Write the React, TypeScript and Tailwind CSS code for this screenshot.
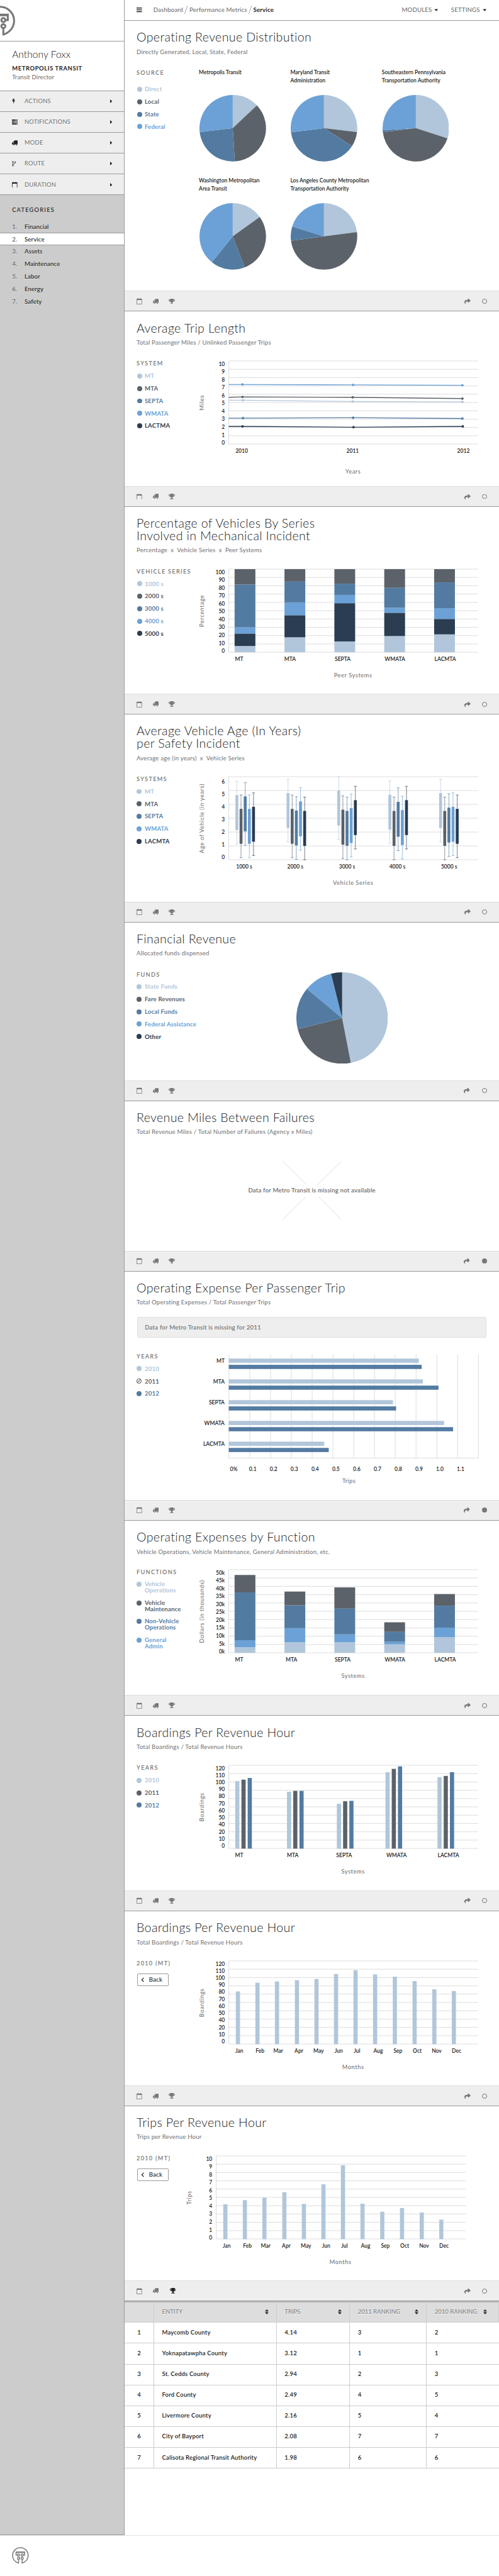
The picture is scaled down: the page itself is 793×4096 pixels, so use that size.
import type { ReactNode } from "react";
import { FaCaretDown, FaChevronLeft, FaShare, FaTrophy } from "react-icons/fa";

// The root sets --spacing so that one spacing step equals one unit of the 1200-unit wide layout.

const LIGHT = "#b1c6da";
const SLATE = "#5b6269";
const STEEL = "#537ba2";
const SKY = "#6ba1d6";
const NAVY = "#2a3d51";
const SYSTEMS = ["MT", "MTA", "SEPTA", "WMATA", "LACMTA"];
const MONTHS = ["Jan", "Feb", "Mar", "Apr", "May", "Jun", "Jul", "Aug", "Sep", "Oct", "Nov", "Dec"];

/* ---------- icons ---------- */

function CalendarIcon({ className }: { className: string }) {
  return (
    <svg viewBox="0 0 13 15" className={className} fill="none" stroke="currentColor">
      <rect x="0.6" y="2.4" width="11.8" height="12" strokeWidth="1.2" />
      <path d="M0.6 3.3h11.8" strokeWidth="2.6" />
      <path d="M3.7 0.2v3.6M9.3 0.2v3.6" strokeWidth="2.2" />
    </svg>
  );
}

function TruckIcon({ className }: { className: string }) {
  return (
    <svg viewBox="0 0 14 13" className={className} fill="currentColor">
      <path
        fillRule="evenodd"
        d="M5.3 0.5H14V10.2H12.7A2 2 0 0 0 8.9 10.2H6.1A2 2 0 0 0 2.3 10.2H0V6.4L3 2.9H5.3ZM1.5 6.4H4.3V4.1H3.5Z"
      />
      <circle cx="4.2" cy="10.8" r="1.5" />
      <circle cx="10.8" cy="10.8" r="1.5" />
    </svg>
  );
}

function BoltIcon({ className }: { className: string }) {
  return (
    <svg viewBox="0 0 8 13" className={className} fill="currentColor">
      <path d="M2.4 0H6L4.6 4L7.6 3.4L2.8 13L3.8 6.2L0.8 6.9Z" />
    </svg>
  );
}

function TasksIcon({ className }: { className: string }) {
  return (
    <svg viewBox="0 0 14 12" className={className}>
      <path d="M0 0h14v3H0zM0 4.5h14v3H0zM0 9h14v3H0z" fill="currentColor" />
      <path d="M8 1.5h5M5 6h8M10 10.5h3" stroke="#eee" strokeWidth="1" />
    </svg>
  );
}

function ForkIcon({ className }: { className: string }) {
  return (
    <svg viewBox="0 0 10 13" className={className} fill="none" stroke="currentColor" strokeWidth="1.2">
      <circle cx="2.2" cy="2" r="1.3" />
      <circle cx="7.8" cy="2.8" r="1.3" />
      <circle cx="2.2" cy="11" r="1.3" />
      <path d="M2.2 3.3v6.4M7.8 4.1c0 3-5.6 2.4-5.6 4.8" />
    </svg>
  );
}

function Logo({ className, stroke }: { className: string; stroke: number }) {
  return (
    <svg viewBox="0 0 40 40" className={className} fill="none" stroke="#777" strokeWidth={stroke}>
      <path
        d="M15.7 29.6V38.2C6.8 35 1.5 28.2 1.5 20A18.5 18.5 0 0 1 38.5 20C38.5 28.2 33.2 35 24.3 38.2V29.6"
        strokeLinejoin="round"
      />
      <path d="M13 19H9.8V11.8H30.2V19H27" />
      <path d="M9.8 12.4H30.2" strokeWidth={stroke + 0.6} />
      <circle cx="15.7" cy="19" r="2.6" />
      <circle cx="24.3" cy="19" r="2.6" />
      <circle cx="15.7" cy="27" r="2.6" />
      <circle cx="24.3" cy="27" r="2.6" />
    </svg>
  );
}

/* ---------- sidebar and header ---------- */

const ACTIONS: [string, ReactNode][] = [
  ["ACTIONS", <BoltIcon className="h-13 w-8" />],
  ["NOTIFICATIONS", <TasksIcon className="h-12 w-14" />],
  ["MODE", <TruckIcon className="h-13 w-14" />],
  ["ROUTE", <ForkIcon className="h-13 w-10" />],
  ["DURATION", <CalendarIcon className="h-15 w-13" />],
];

const CATEGORIES = ["Financial", "Service", "Assets", "Maintenance", "Labor", "Energy", "Safety"];

function Sidebar() {
  return (
    <aside className="w-300 shrink-0 border-r border-b border-[#999] bg-[#ccc]">
      <div className="h-100 overflow-hidden border-b border-[#999] bg-white pt-13">
        <Logo className="-ml-36.5 size-73" stroke={2.5} />
      </div>
      <div className="h-120 border-b border-[#999] bg-white pt-16.5 pl-29">
        <div className="text-[15.5px] leading-30 font-light tracking-[0.005em] text-[#111]">Anthony Foxx</div>
        <div className="mt-8.5 text-[9.4px] leading-20 font-bold tracking-[0.066em] text-[#222]">METROPOLIS TRANSIT</div>
        <div className="text-[9.5px] leading-20 tracking-[0.015em] text-[#6b6b6b]">Transit Director</div>
      </div>
      {ACTIONS.map(([label, icon]) => (
        <div key={label} className="flex h-50 items-center border-b border-[#999] bg-[#eee] pr-29 pl-29 text-[#222]">
          <span className="w-30">{icon}</span>
          <span className="text-[9.3px] tracking-[0.028em] text-[#6b6b6b] [text-shadow:0_1px_0_#fff]">{label}</span>
          <svg viewBox="0 0 5 9" className="ml-auto h-9 w-5">
            <path d="M0 0L5 4.5L0 9Z" fill="#222" />
          </svg>
        </div>
      ))}
      <div className="pt-24.5 pl-29 text-[9.3px] leading-20 font-medium tracking-[0.13em] text-[#222]">CATEGORIES</div>
      <ol className="mt-15.5 text-[9.7px] font-medium tracking-[0.01em] text-[#222]">
        {CATEGORIES.map((c, i) => (
          <li
            key={c}
            className={
              c === "Service"
                ? "flex h-30 items-center border-y border-[#999] bg-white pl-29"
                : "flex h-30 items-center pl-29 [text-shadow:0_1px_0_rgba(255,255,255,0.5)]"
            }
          >
            <span className="w-30 font-semibold text-[#6b6b6b]">{i + 1}.</span>
            {c}
          </li>
        ))}
      </ol>
    </aside>
  );
}

function Slash() {
  return (
    <svg viewBox="0 0 8 20" className="mx-3.5 h-20 w-8">
      <path d="M7.5 0L0.5 20" stroke="#777" strokeWidth="1" />
    </svg>
  );
}

function Header() {
  return (
    <header className="flex h-50 items-center border-b border-[#999] pr-30 pl-28.5 text-[9.6px] tracking-[0.02em] text-[#666]">
      <svg viewBox="0 0 13 11" className="mr-27.5 h-11 w-13">
        <path d="M0 1.2h13M0 5.5h13M0 9.8h13" stroke="#222" strokeWidth="2.2" />
      </svg>
      <span>Dashboard</span>
      <Slash />
      <span>Performance Metrics</span>
      <Slash />
      <span className="font-bold text-[#222]">Service</span>
      <span className="ml-auto">MODULES</span>
      <FaCaretDown className="ml-6 h-14 w-10 text-[#222]" />
      <span className="ml-30">SETTINGS</span>
      <FaCaretDown className="ml-6 h-14 w-10 text-[#222]" />
    </header>
  );
}

/* ---------- section scaffolding ---------- */

function Toolbar({ filled, nudged, trophyOn }: { filled?: boolean; nudged?: boolean; trophyOn?: boolean }) {
  return (
    <div className="flex h-50 items-center border-t border-b border-t-[#ddd] border-b-[#999] bg-[#eee] pr-29.5 pl-28.5 text-[#777]">
      <CalendarIcon className="h-15 w-13" />
      <TruckIcon className="ml-26 h-13 w-14" />
      <FaTrophy className={trophyOn ? "ml-26.5 h-13.5 w-15 text-[#222]" : "ml-24.5 h-13.5 w-15"} />
      <FaShare className={nudged ? "mr-29 ml-auto size-15" : "mr-27 ml-auto size-15"} />
      <span className={filled ? "size-12 rounded-full bg-[#777]" : "size-12 rounded-full border-[1.2px] border-[#777]"} />
    </div>
  );
}

function Section({ size, title, subtitle, children }: { size: string; title: string[]; subtitle: string; children: ReactNode }) {
  return (
    <section className={`${size} px-28.5`}>
      <h2 className="text-[19.6px] leading-30 font-light tracking-[0.018em] text-[#222]">
        {title.map((t) => (
          <span key={t} className="block">{t}</span>
        ))}
      </h2>
      <p className="mt-10 text-[9.6px] leading-20 tracking-[0.022em] whitespace-pre text-[#707070]">{subtitle}</p>
      {children}
    </section>
  );
}

function LegendTitle({ children }: { children: ReactNode }) {
  return <h3 className="text-[9.2px] leading-20 font-semibold tracking-[0.14em] whitespace-nowrap text-[#777]">{children}</h3>;
}

function Dot({ color, banned }: { color: string; banned?: boolean }) {
  if (banned) {
    return (
      <svg viewBox="0 0 12 12" className="size-12" fill="none" stroke={color} strokeWidth="1.6">
        <circle cx="6" cy="6" r="5.1" />
        <path d="M2.6 9.4L9.4 2.6" />
      </svg>
    );
  }
  return <span className="block size-12 rounded-full" style={{ backgroundColor: color }} />;
}

function Legend({ title, items, list = "mt-10 gap-10", dot = "pl-0", banned }: {
  title: string;
  items: [string, string][];
  list?: string;
  dot?: string;
  banned?: string;
}) {
  return (
    <div className="w-150 shrink-0">
      <LegendTitle>{title}</LegendTitle>
      <ul className={`flex flex-col ${list}`}>
        {items.map(([label, color]) => (
          <li key={label} className="flex leading-20">
            <span className={`flex h-20 w-19.5 items-center ${dot}`}>
              <Dot color={color} banned={label === banned} />
            </span>
            <span className="text-[9.6px] font-bold tracking-[0.02em]" style={{ color }}>{label}</span>
          </li>
        ))}
      </ul>
    </div>
  );
}

function BackPanel({ width }: { width: string }) {
  return (
    <div className={`${width} shrink-0`}>
      <LegendTitle>2010 (MT)</LegendTitle>
      <button className="mt-15 ml-1.5 flex h-30 w-75 items-center rounded-[2px] border border-[#999] pl-8 text-[9.6px] font-medium tracking-[0.02em] text-[#222]">
        <FaChevronLeft className="mr-11 h-12 w-8" />
        Back
      </button>
    </div>
  );
}

/* ---------- charts ---------- */

function Pie({ slices, className }: { slices: [string, number][]; className: string }) {
  let from = 0;
  return (
    <svg viewBox="-1 -1 2 2" className={className}>
      {slices.map(([color, to]) => {
        const a = (from * Math.PI) / 180;
        const b = (to * Math.PI) / 180;
        const large = to - from > 180 ? 1 : 0;
        from = to;
        return (
          <path key={color} fill={color} d={`M0 0L${Math.sin(a)} ${-Math.cos(a)}A1 1 0 ${large} 1 ${Math.sin(b)} ${-Math.cos(b)}Z`} />
        );
      })}
    </svg>
  );
}

function Chart({ yLabels, yStart = 11.5, yStep = 19, rows = 11, yTitle, xTitle, xTitleY = 260.5, xLabels, anchor = "start", children }: {
  yLabels: string[];
  yStart?: number;
  yStep?: number;
  rows?: number;
  yTitle: string;
  xTitle: string;
  xTitleY?: number;
  xLabels: [string, number][];
  anchor?: "start" | "middle";
  children: ReactNode;
}) {
  const gap = 200 / (rows - 1);
  return (
    <svg viewBox="-72 -4.5 692 285" className="h-285 w-692 shrink-0 overflow-visible">
      <g stroke="#ccc" strokeWidth="1">
        {Array.from({ length: rows }, (_, i) => (
          <path key={i} d={`M0 ${i * gap}H600`} />
        ))}
        <path d="M0 0V200" />
      </g>
      {children}
      <g fontSize="12.9" fontWeight="600" fill="#222">
        {yLabels.map((t, i) => (
          <text key={t} x="-9.5" y={yStart + i * yStep} textAnchor="end">{t}</text>
        ))}
        {xLabels.map(([t, x]) => (
          <text key={t} x={x} y="220.5" textAnchor={anchor}>{t}</text>
        ))}
      </g>
      <g fontSize="14" letterSpacing="0.9" fill="#6b6b6b" textAnchor="middle">
        <text transform="translate(-60.5 100.5) rotate(-90)">{yTitle}</text>
        <text x="299" y={xTitleY}>{xTitle}</text>
      </g>
    </svg>
  );
}

const count = (from: number, to: number, step: number, unit = "") =>
  Array.from({ length: (from - to) / step + 1 }, (_, i) => `${from - i * step}${unit}`);

const TRIP_LINES: [string, [number, number][]][] = [
  [SKY, [[0, 56.5], [33, 56.5], [299, 57.5], [562, 58.5]]],
  [SLATE, [[0, 87.5], [33, 86.5], [298, 87.5], [562, 90.5]]],
  [LIGHT, [[0, 94.5], [34, 94.5], [298, 97.5], [562, 98.5]]],
  [STEEL, [[0, 137.5], [34, 137.5], [299, 136.5], [562, 138.5]]],
  [NAVY, [[0, 157.5], [33, 157.5], [300, 159.5], [563, 157.5]]],
];

function Stack({ x, parts, colors }: { x: number; parts: number[]; colors: string[] }) {
  let y = 200;
  return (
    <>
      {parts.map((h, i) => {
        y -= h;
        return <rect key={i} x={x} y={y} width="50" height={h} fill={colors[i]} />;
      })}
    </>
  );
}

const BOARDING_LABELS = ["120", "110", "100", "90", "80", "70", "60", "50", "40", "20", "10", "0"];
const STACK_X = [14, 134, 254, 374, 494];

const MECHANICAL = [
  [15, 30, 15, 103, 37],
  [36, 53, 31, 50, 30],
  [26, 92, 20, 27, 35],
  [39, 56, 12, 48, 45],
  [43, 37, 26, 62, 32],
];

const EXPENSES = [
  [13.4, 17, 115, 42],
  [25.5, 34, 55, 33],
  [25.5, 19, 62, 51],
  [20.5, 6, 24, 23],
  [38, 22.5, 53, 28],
];

const AGES: [number, number[]][] = [
  [19.5, [11, 44, 14, 44, 39]],
  [142.5, [6, 44, 48, 26, 49]],
  [264.5, [0, 46, 49, 42, 23]],
  [387.5, [10, 49, 27, 47, 23]],
  [509.5, [6, 49, 41, 39, 44]],
];

function AgeBox({ x, top, color }: { x: number; top: number; color: string }) {
  return (
    <g fill={color}>
      <rect x={x - 3.5} y={top + 33.5} width="7" height="84" />
      <path d={`M${x} ${top}V${top + 151}M${x - 3.5} ${top}h7M${x - 3.5} ${top + 151}h7`} stroke={color} strokeWidth="1" />
    </g>
  );
}

const BOARDINGS: [number, number[]][] = [
  [15.5, [162.5, 166, 170]],
  [140, [137, 139, 139]],
  [260, [108, 114, 115]],
  [377, [184, 192, 198]],
  [502, [172, 175, 184]],
];

const BAR_X = [17, 64, 111, 159, 206, 253, 300, 347, 394.5, 442, 489.5, 536.5];
const MONTH_X = [25.2, 75, 119, 168.7, 216, 264.3, 308.5, 359.3, 407, 453.4, 500.2, 548];

function MonthChart({ values, ...rest }: { values: number[]; yLabels: string[]; yStep: number; yTitle: string }) {
  return (
    <Chart {...rest} xTitle="Months" anchor="middle" xLabels={MONTHS.map((m, i) => [m, MONTH_X[i]])}>
      {values.map((v, i) => (
        <rect key={i} x={BAR_X[i]} y={200.5 - v} width="10" height={v} fill={LIGHT} />
      ))}
    </Chart>
  );
}

const TRIP_COST: [number, number][] = [[457, 464], [467, 504.5], [395, 402.5], [518, 539.6], [229.6, 240.5]];
const TRIP_TICKS = ["0%", "0.1", "0.2", "0.3", "0.4", "0.5", "0.6", "0.7", "0.8", "0.9", "1.0", "1.1"];

function TripCostChart() {
  return (
    <svg viewBox="-72 -5.5 692 330" className="h-330 w-692 shrink-0">
      <g stroke="#ccc" strokeWidth="1">
        {Array.from({ length: 13 }, (_, i) => (
          <path key={i} d={`M${i * 50 + 0.5} 0V249.5`} />
        ))}
        <path d="M0 249.5H601" />
      </g>
      <g fontSize="12.9" fontWeight="600" fill="#222">
        {TRIP_COST.map(([a, b], i) => (
          <g key={i}>
            <rect x="0" y={10 + i * 50} width={a} height="10" fill={LIGHT} />
            <rect x="0" y={25 + i * 50} width={b} height="10" fill={STEEL} />
            <text x="-10" y={19.7 + i * 50} textAnchor="end">{SYSTEMS[i]}</text>
          </g>
        ))}
        {TRIP_TICKS.map((t, i) => (
          <text key={t} x={i === 0 ? 12 : 7.8 + i * 50} y="280" textAnchor="middle">{t}</text>
        ))}
      </g>
      <text x="289" y="309" fontSize="14" letterSpacing="0.6" fill="#6b6b6b" textAnchor="middle">Trips</text>
    </svg>
  );
}

const REVENUE_PIES: [string, string, number[]][] = [
  ["Metropolis Transit", "", [46.6, 176.4, 263.4]],
  ["Maryland Transit", "Administration", [96.7, 122.4, 263]],
  ["Southeastern Pennsylvania", "Transportation Authority", [107.9, 263, 266.5]],
  ["Washington Metropolitan", "Area Transit", [54.3, 159, 218.9]],
  ["Los Angeles County Metropolitan", "Transportation Authority", [82.6, 262.6, 287.4]],
];

/* ---------- table ---------- */

const COLUMNS = ["ENTITY", "TRIPS", "2011 RANKING", "2010 RANKING"];
const ROWS = [
  ["1", "Maycomb County", "4.14", "3", "2"],
  ["2", "Yoknapatawpha County", "3.12", "1", "1"],
  ["3", "St. Cedds County", "2.94", "2", "3"],
  ["4", "Ford County", "2.49", "4", "5"],
  ["5", "Livermore County", "2.16", "5", "4"],
  ["6", "City of Bayport", "2.08", "7", "7"],
  ["7", "Calisota Regional Transit Authority", "1.98", "6", "6"],
];

function SortIcon() {
  return (
    <svg viewBox="0 0 9 12" className="ml-auto h-12 w-9">
      <path d="M4.5 0L9 5H0ZM4.5 12L0 7H9Z" fill="#222" />
    </svg>
  );
}

function RankingTable() {
  return (
    <table className="w-900 table-fixed border-collapse">
      <colgroup>
        <col className="w-70" />
        <col className="w-295" />
        <col className="w-176" />
        <col className="w-185" />
        <col className="w-174" />
      </colgroup>
      <thead>
        <tr className="h-51 bg-[#ddd] shadow-[inset_0_2px_1px_#b5b5b5]">
          <th className="border-r border-b border-[#ccc]" />
          {COLUMNS.map((c) => (
            <th key={c} className="border-r border-b border-[#ccc] p-0">
              <div
                className={
                  c === "2010 RANKING"
                    ? "flex items-center pr-28 pl-19 text-[9.5px] font-normal text-[#777] [text-shadow:0_1px_0_#fff]"
                    : "flex items-center pr-18 pl-19 text-[9.5px] font-normal text-[#777] [text-shadow:0_1px_0_#fff]"
                }
              >
                {c}
                <SortIcon />
              </div>
            </th>
          ))}
        </tr>
      </thead>
      <tbody>
        {ROWS.map((row) => (
          <tr key={row[0]} className="h-50 text-[9.5px] font-semibold tracking-[0.02em] text-[#222]">
            {row.map((cell, i) => (
              <td
                key={i}
                className={
                  i === 0
                    ? "border-r border-b border-[#ccc] p-0 text-center"
                    : i === 4
                      ? "border-b border-[#ccc] p-0 pl-19"
                      : "border-r border-b border-[#ccc] p-0 pl-19"
                }
              >
                {cell}
              </td>
            ))}
          </tr>
        ))}
      </tbody>
    </table>
  );
}

/* ---------- page ---------- */

export default function App() {
  return (
    <div className="flex h-[4096px] w-full flex-col overflow-hidden bg-white font-[Lato,sans-serif] [--spacing:0.66065px]">
      <div className="flex h-6101 shrink-0">
        <Sidebar />
        <main className="min-w-0 flex-1">
          <Header />

          <Section size="h-650 pt-24.5" title={["Operating Revenue Distribution"]} subtitle="Directly Generated, Local, State, Federal">
            <div className="mt-30.5 flex">
              <Legend
                title="SOURCE"
                list="mt-20 gap-10"
                dot="pl-1.5"
                items={[["Direct", LIGHT], ["Local", SLATE], ["State", STEEL], ["Federal", SKY]]}
              />
              <div className="grid grid-cols-[repeat(3,145.34px)] gap-y-36">
                {REVENUE_PIES.map(([a, b, [x, y, z]]) => (
                  <div key={a}>
                    <h4 className="h-40 text-[8.5px] leading-20 font-semibold whitespace-nowrap text-[#222]">
                      <span className="block">{a}</span>
                      <span className="block">{b}</span>
                    </h4>
                    <Pie className="mt-24 ml-1.5 size-160" slices={[[LIGHT, x], [SLATE, y], [STEEL, z], [SKY, 360]]} />
                  </div>
                ))}
              </div>
            </div>
          </Section>
          <Toolbar />

          <Section size="h-420 pt-24.5" title={["Average Trip Length"]} subtitle="Total Passenger Miles / Unlinked Passenger Trips">
            <div className="mt-30.5 flex">
              <Legend
                title="SYSTEM"
                dot="pl-1.5"
                items={[["MT", LIGHT], ["MTA", SLATE], ["SEPTA", STEEL], ["WMATA", SKY], ["LACTMA", NAVY]]}
              />
              <Chart
                yLabels={count(10, 0, 1)}
                yTitle="Miles"
                xTitle="Years"
                xTitleY={270.5}
                anchor="middle"
                xLabels={[["2010", 31], ["2011", 298], ["2012", 564.5]]}
              >
                {TRIP_LINES.map(([color, pts]) => (
                  <g key={color} fill={color}>
                    <polyline points={pts.join(" ")} fill="none" stroke={color} strokeWidth="2" />
                    {pts.slice(1).map(([x, y]) => (
                      <circle key={x} cx={x} cy={y} r="3" />
                    ))}
                  </g>
                ))}
              </Chart>
            </div>
          </Section>
          <Toolbar />

          <Section
            size="h-450 pt-24.5"
            title={["Percentage of Vehicles By Series", "Involved in Mechanical Incident"]}
            subtitle="Percentage  x  Vehicle Series  x  Peer Systems"
          >
            <div className="mt-30.5 flex">
              <Legend
                title="VEHICLE SERIES"
                dot="pl-1.5"
                items={[["1000 s", LIGHT], ["2000 s", SLATE], ["3000 s", STEEL], ["4000 s", SKY], ["5000 s", NAVY]]}
              />
              <Chart
                yLabels={count(100, 0, 10)}
                yTitle="Percentage"
                xTitle="Peer Systems"
                xLabels={[["MT", 15], ["MTA", 133.5], ["SEPTA", 255], ["WMATA", 375], ["LACMTA", 495]]}
              >
                {MECHANICAL.map((parts, i) => (
                  <Stack key={i} x={STACK_X[i]} parts={parts} colors={[LIGHT, NAVY, SKY, STEEL, SLATE]} />
                ))}
              </Chart>
            </div>
          </Section>
          <Toolbar />

          <Section
            size="h-450 pt-24.5"
            title={["Average Vehicle Age (In Years)", "per Safety Incident"]}
            subtitle="Average age (in years)  x  Vehicle Series"
          >
            <div className="mt-30.5 flex">
              <Legend
                title="SYSTEMS"
                items={[["MT", LIGHT], ["MTA", SLATE], ["SEPTA", STEEL], ["WMATA", SKY], ["LACMTA", NAVY]]}
              />
              <Chart
                yLabels={count(6, 0, 1)}
                yStart={16}
                yStep={30.5}
                rows={7}
                yTitle="Age of Vehicle (in years)"
                xTitle="Vehicle Series"
                anchor="middle"
                xLabels={[["1000 s", 37], ["2000 s", 160], ["3000 s", 284.5], ["4000 s", 405.5], ["5000 s", 530]]}
              >
                {AGES.map(([x, tops]) =>
                  tops.map((t, i) => (
                    <AgeBox key={`${x}-${i}`} x={x + i * 10} top={t} color={[LIGHT, SLATE, STEEL, SKY, NAVY][i]} />
                  )),
                )}
              </Chart>
            </div>
          </Section>
          <Toolbar />

          <Section size="h-380 pt-24.5" title={["Financial Revenue"]} subtitle="Allocated funds dispensed">
            <div className="mt-30.5 flex">
              <Legend
                title="FUNDS"
                items={[["State Funds", LIGHT], ["Fare Revenues", SLATE], ["Local Funds", STEEL], ["Federal Assistance", SKY], ["Other", NAVY]]}
              />
              <Pie
                className="mt-4.5 ml-234.5 size-220"
                slices={[[LIGHT, 169], [SLATE, 255.7], [STEEL, 309.7], [SKY, 346], [NAVY, 360]]}
              />
            </div>
          </Section>
          <Toolbar nudged />

          <Section
            size="h-360 pt-24.5"
            title={["Revenue Miles Between Failures"]}
            subtitle="Total Revenue Miles / Total Number of Failures (Agency x Miles)"
          >
            <div className="mt-59.5 grid place-items-center">
              <svg viewBox="0 0 142 142" className="size-142 [grid-area:1/1]">
                <path d="M0 0L56 56M142 0L84 58M56 86L0 142M87 86L142 142" stroke="#ccc" strokeWidth="1" />
              </svg>
              <p className="text-[9.65px] font-semibold tracking-[0.02em] text-[#6b6b6b] [grid-area:1/1]">
                Data for Metro Transit is missing not available
              </p>
            </div>
          </Section>
          <Toolbar nudged filled />

          <Section size="h-550 pt-24.5" title={["Operating Expense Per Passenger Trip"]} subtitle="Total Operating Expenses / Total Passenger Trips">
            <div className="mt-25.5 mr-1.5 ml-1.5 flex h-50 items-center rounded-[3px] border border-[#ddd] bg-[#eee] pl-17 text-[9.65px] font-semibold tracking-[0.02em] text-[#777]">
              Data for Metro Transit is missing for 2011
            </div>
            <div className="mt-34.5 flex">
              <Legend title="YEARS" banned="2011" items={[["2010", LIGHT], ["2011", SLATE], ["2012", STEEL]]} />
              <TripCostChart />
            </div>
          </Section>
          <Toolbar nudged filled />

          <Section
            size="h-420 pt-24.5"
            title={["Operating Expenses by Function"]}
            subtitle="Vehicle Operations, Vehicle Maintenance, General Administration, etc."
          >
            <div className="mt-28.5 flex">
              <div className="w-150 shrink-0">
                <LegendTitle>FUNCTIONS</LegendTitle>
                <ul className="mt-12.5 flex flex-col gap-15">
                  {[
                    ["Vehicle", "Operations", LIGHT],
                    ["Vehicle", "Maintenance", SLATE],
                    ["Non-Vehicle", "Operations", STEEL],
                    ["General", "Admin", SKY],
                  ].map(([a, b, color]) => (
                    <li key={a + b} className="flex text-[9.6px] leading-15 font-bold tracking-[0.02em]" style={{ color }}>
                      <span className="flex h-15 w-19.5 items-center">
                        <Dot color={color} />
                      </span>
                      <span>
                        <span className="block">{a}</span>
                        <span className="block">{b}</span>
                      </span>
                    </li>
                  ))}
                </ul>
              </div>
              <Chart
                yLabels={count(50, 0, 5, "k")}
                yTitle="Dollars (in thousands)"
                xTitle="Systems"
                xLabels={[["MT", 15], ["MTA", 137], ["SEPTA", 255], ["WMATA", 375], ["LACMTA", 495]]}
              >
                {EXPENSES.map((parts, i) => (
                  <Stack key={i} x={STACK_X[i]} parts={parts} colors={[LIGHT, SKY, STEEL, SLATE]} />
                ))}
              </Chart>
            </div>
          </Section>
          <Toolbar />

          <Section size="h-420 pt-24.5" title={["Boardings Per Revenue Hour"]} subtitle="Total Boardings / Total Revenue Hours">
            <div className="mt-30.5 flex">
              <Legend title="YEARS" items={[["2010", LIGHT], ["2011", SLATE], ["2012", STEEL]]} />
              <Chart
                yLabels={BOARDING_LABELS}
                yStep={17}
                yTitle="Boardings"
                xTitle="Systems"
                xLabels={[["MT", 15], ["MTA", 140], ["SEPTA", 258.5], ["WMATA", 379], ["LACMTA", 502.5]]}
              >
                {BOARDINGS.map(([x, values]) =>
                  values.map((v, i) => (
                    <rect key={`${x}-${i}`} x={x + i * 15} y={200.5 - v} width="10" height={v} fill={[LIGHT, SLATE, STEEL][i]} />
                  )),
                )}
              </Chart>
            </div>
          </Section>
          <Toolbar />

          <Section size="h-420 pt-24.5" title={["Boardings Per Revenue Hour"]} subtitle="Total Boardings / Total Revenue Hours">
            <div className="mt-30.5 flex">
              <BackPanel width="w-150" />
              <MonthChart
                yLabels={BOARDING_LABELS}
                yStep={17}
                yTitle="Boardings"
                values={[127, 148, 151, 154, 157, 169, 178, 168, 162.5, 152, 132, 128]}
              />
            </div>
          </Section>
          <Toolbar />

          <Section size="h-419 pt-23.5" title={["Trips Per Revenue Hour"]} subtitle="Trips per Revenue Hour">
            <div className="mt-30.5 flex">
              <BackPanel width="w-120" />
              <MonthChart
                yLabels={count(10, 0, 1)}
                yStep={19}
                yTitle="Trips"
                values={[84, 94, 100, 113, 85, 132, 178, 85.5, 66, 75, 64, 47]}
              />
            </div>
          </Section>
          <Toolbar trophyOn />
          <RankingTable />
        </main>
      </div>
      <footer className="flex-1 border-t border-[#e3e3e3] pt-28 pl-29">
        <Logo className="size-40.5" stroke={2.2} />
      </footer>
    </div>
  );
}
